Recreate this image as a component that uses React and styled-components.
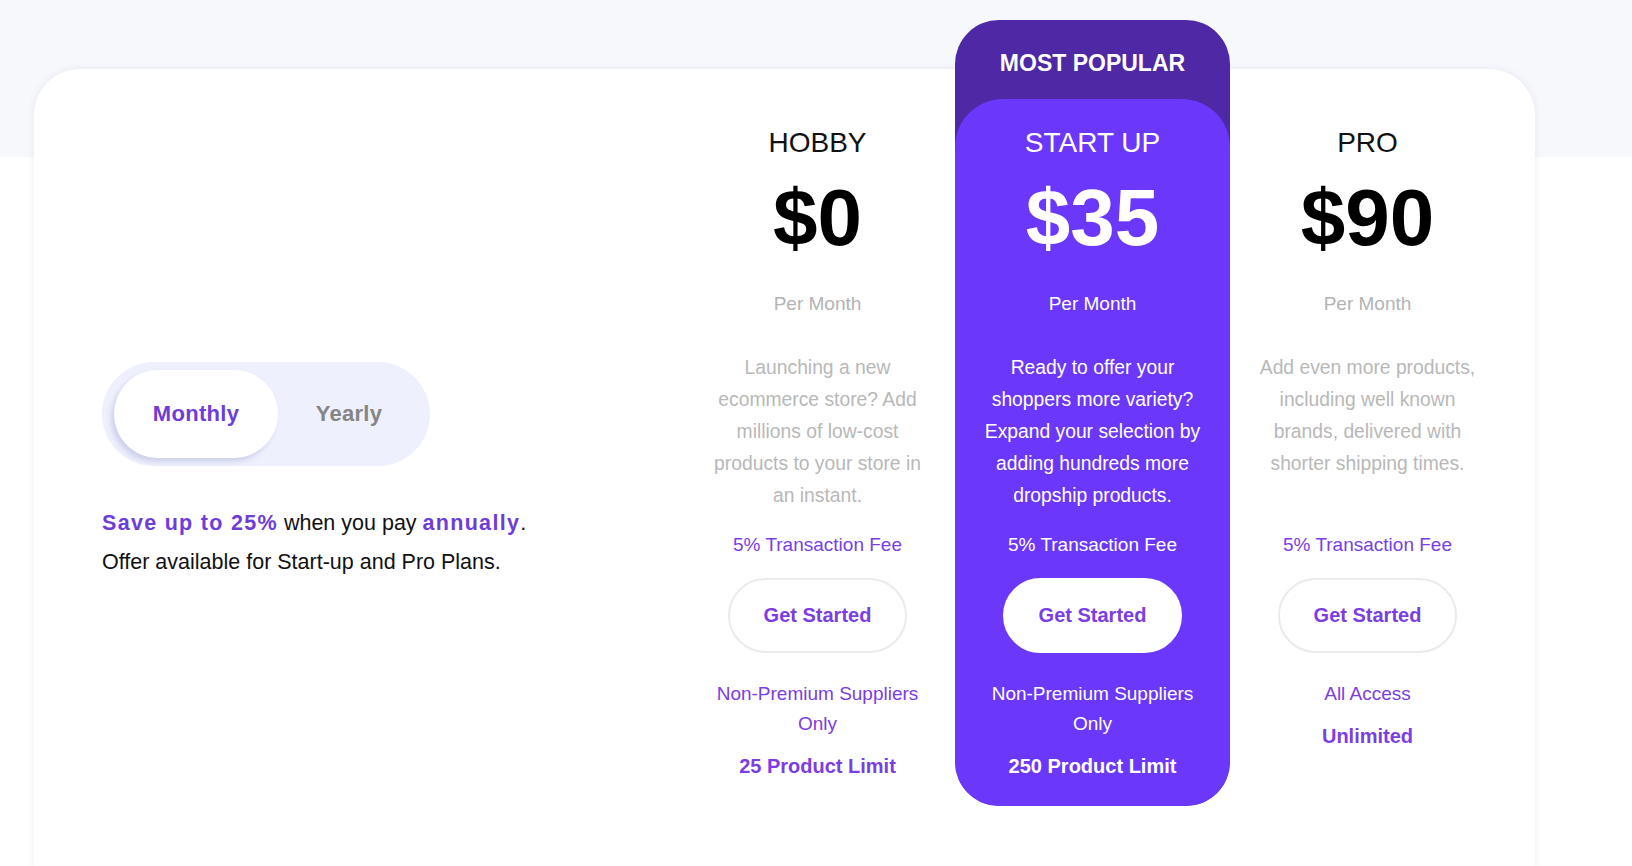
import React, { useState } from 'react';
import styled, { createGlobalStyle } from 'styled-components';

const GlobalStyle = createGlobalStyle`
  html, body {
    margin: 0;
    padding: 0;
    background: #ffffff;
    font-family: 'Liberation Sans', Arial, sans-serif;
    overflow: hidden;
  }
`;

const Page = styled.div`
  min-height: 866px;
  padding-top: 69px;
  background: linear-gradient(#f7f8fc 0, #f7f8fc 157px, #ffffff 157px);
`;

const Card = styled.div`
  width: 1501px;
  margin-left: 34px;
  box-sizing: border-box;
  min-height: 830px;
  padding: 30px 30px 80px 68px;
  background: #ffffff;
  border-radius: 46px 46px 0 0;
  box-shadow: 0 0 8px rgba(30, 30, 80, 0.07);
  display: grid;
  grid-template-columns: 1fr repeat(3, 275px);
  align-items: start;
`;

const Intro = styled.div`
  margin-top: 263px;
`;

const Toggle = styled.div`
  width: 328px;
  height: 104px;
  box-sizing: border-box;
  padding: 8px 12px;
  border-radius: 52px;
  background: #eef0fd;
  display: flex;
  align-items: center;
`;

const ToggleOption = styled.button`
  border: none;
  cursor: pointer;
  font-family: inherit;
  font-weight: 700;
  font-size: 22px;
  height: 88px;
  border-radius: 44px;
  background: ${(p) => (p.$active ? '#ffffff' : 'transparent')};
  color: ${(p) => (p.$active ? '#6d3ddb' : '#858585')};
  box-shadow: ${(p) => (p.$active ? '-3px 4px 5px rgba(150, 155, 205, 0.35)' : 'none')};
  width: ${(p) => (p.$active ? '164px' : 'auto')};
  flex: ${(p) => (p.$active ? 'none' : '1')};
  padding: ${(p) => (p.$active ? '0' : '0 0 0 2px')};
  letter-spacing: 0.3px;
`;

const Note = styled.p`
  margin: 38px 0 0;
  font-size: 21.5px;
  line-height: 38.5px;
  color: #111111;
`;

const Strong = styled.b`
  color: #6d3ddb;
  font-weight: 700;
  letter-spacing: 1.3px;
`;

const Popular = styled.div`
  margin-top: -79px;
  background: #4e28a5;
  border-radius: 44px;
  overflow: hidden;
`;

const PopularTag = styled.div`
  height: 79px;
  box-sizing: border-box;
  padding-top: 29px;
  text-align: center;
  color: #ffffff;
  font-weight: 700;
  font-size: 23px;
  line-height: 28px;
`;

const Plan = styled.div`
  display: flex;
  flex-direction: column;
  align-items: center;
  text-align: center;
  padding: 27px 0 28px;
  background: ${(p) => (p.$featured ? '#6b38fb' : 'transparent')};
  border-radius: ${(p) => (p.$featured ? '48px 48px 44px 44px' : '0')};
  color: ${(p) => (p.$featured ? '#ffffff' : '#7a3de6')};
`;

const PlanName = styled.h3`
  margin: 0;
  font-size: 28px;
  line-height: 34px;
  font-weight: 400;
  color: ${(p) => (p.$featured ? '#ffffff' : '#111111')};
`;

const Price = styled.div`
  margin-top: 18px;
  font-size: 80px;
  line-height: 80px;
  font-weight: 700;
  color: ${(p) => (p.$featured ? '#ffffff' : '#000000')};
`;

const Period = styled.div`
  margin-top: 34px;
  font-size: 19px;
  line-height: 24px;
  color: ${(p) => (p.$featured ? '#ffffff' : '#b3b3b3')};
`;

const Description = styled.p`
  margin: 36px 0 0;
  width: 222px;
  height: 160px;
  font-size: 19.3px;
  line-height: 32px;
  color: ${(p) => (p.$featured ? '#ffffff' : '#b8b8b8')};
`;

const Fee = styled.div`
  margin-top: 21px;
  font-size: 19px;
  line-height: 24px;
`;

const StartButton = styled.button`
  margin-top: 21px;
  width: 179px;
  height: 75px;
  border-radius: 40px;
  border: 2px solid ${(p) => (p.$featured ? '#ffffff' : '#ebebeb')};
  background: #ffffff;
  color: #7a3de6;
  font-family: inherit;
  font-weight: 700;
  font-size: 20px;
  cursor: pointer;
`;

const Feature = styled.div`
  margin-top: 26px;
  width: 222px;
  font-size: 19px;
  line-height: 30px;
`;

const Limit = styled.div`
  margin-top: 15px;
  font-size: 20px;
  line-height: 24px;
  font-weight: 700;
`;

const plans = [
  {
    name: 'HOBBY',
    price: '$0',
    text: 'Launching a new ecommerce store? Add millions of low-cost products to your store in an instant.',
    feature: 'Non-Premium Suppliers Only',
    limit: '25 Product Limit',
  },
  {
    name: 'START UP',
    price: '$35',
    text: 'Ready to offer your shoppers more variety? Expand your selection by adding hundreds more dropship products.',
    feature: 'Non-Premium Suppliers Only',
    limit: '250 Product Limit',
    featured: true,
  },
  {
    name: 'PRO',
    price: '$90',
    text: 'Add even more products, including well known brands, delivered with shorter shipping times.',
    feature: 'All Access',
    limit: 'Unlimited',
  },
];

const PlanBody = ({ plan }) => (
  <Plan $featured={plan.featured}>
    <PlanName $featured={plan.featured}>{plan.name}</PlanName>
    <Price $featured={plan.featured}>{plan.price}</Price>
    <Period $featured={plan.featured}>Per Month</Period>
    <Description $featured={plan.featured}>{plan.text}</Description>
    <Fee>5% Transaction Fee</Fee>
    <StartButton $featured={plan.featured}>Get Started</StartButton>
    <Feature>{plan.feature}</Feature>
    <Limit>{plan.limit}</Limit>
  </Plan>
);

export default function App() {
  const [billing, setBilling] = useState('monthly');

  return (
    <Page>
      <GlobalStyle />
      <Card>
        <Intro>
          <Toggle>
            <ToggleOption $active={billing === 'monthly'} onClick={() => setBilling('monthly')}>
              Monthly
            </ToggleOption>
            <ToggleOption $active={billing === 'yearly'} onClick={() => setBilling('yearly')}>
              Yearly
            </ToggleOption>
          </Toggle>
          <Note>
            <Strong>Save up to 25%</Strong> when you pay <Strong>annually</Strong>.
            <br />
            Offer available for Start-up and Pro Plans.
          </Note>
        </Intro>
        {plans.map((plan) =>
          plan.featured ? (
            <Popular key={plan.name}>
              <PopularTag>MOST POPULAR</PopularTag>
              <PlanBody plan={plan} />
            </Popular>
          ) : (
            <PlanBody key={plan.name} plan={plan} />
          )
        )}
      </Card>
    </Page>
  );
}
